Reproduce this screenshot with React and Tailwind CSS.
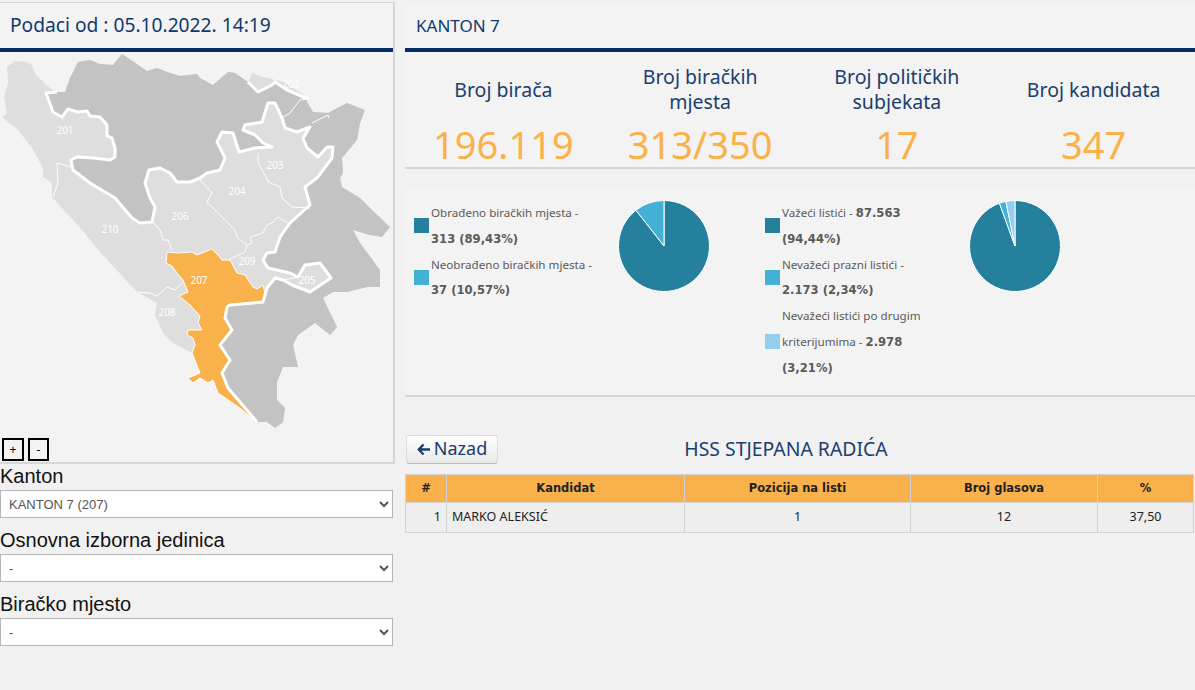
const OUTLINE_TOP = '57,92 65,92 70,78 78,62 90,60 100,64 113,65 122,54 128,58 147,71 157,68 170,73 180,76 197,74 200,78 213,85 228,72 235,73 248,82 258,92 272,85 275,82 287,90 308,99'
const OUTLINE_EAST = '307,102 313,112 328,113 347,103 365,110 360,123 357,140 342,158 343,173 340,178 342,187 360,198 372,210 390,227 382,237 370,235 353,230 360,243 380,270 380,287 367,287 347,292 333,292 323,298 337,327 330,335 315,323 298,335 293,345 298,367 283,367 277,382 277,400 285,408 283,422 275,428 267,422 258,422'
const BOUNDARY = '257,422 228,388 222,373 230,360 220,345 232,330 225,318 227,307 230,305 263,302 267,288 275,278 283,280 292,285 310,292 331,278 320,263 305,265 298,277 290,273 268,268 263,260 267,253 275,252 280,237 290,223 310,205 305,187 317,178 332,158 333,147 327,147 318,157 307,148 303,138 310,127 297,132 285,128 282,118 275,103 268,103 262,122 245,125 243,130 255,135 263,143 272,147 255,148 239,152 233,133 222,132 217,142 225,158 220,170 207,173 200,178 190,182 177,182 170,173 160,168 149,170 145,183 150,198 155,207 152,222 140,223 132,218 115,198 90,183 73,170 71,160 77,157 93,158 110,160 115,157 115,148 112,138 107,136 107,125 100,117 90,116 87,111 78,112 68,109 62,117 53,112 46,93 57,92'
const ORANGE = '167,252 178,253 192,252 197,255 212,249 218,255 222,260 230,260 237,273 245,275 253,287 257,289 263,285 265,293 263,303 230,305 227,307 225,318 232,330 220,345 230,360 222,373 228,388 257,423 240,408 218,393 213,380 208,383 200,378 193,383 188,378 200,373 192,353 195,345 193,338 187,335 188,330 202,330 198,323 200,316 190,305 179,296 188,292 183,280 177,273 172,266 166,263'
const COAST = '257,423 240,408 218,393 213,380 208,383 200,378 193,383 188,378 200,373 192,353 173,343 163,333 155,315 157,303 137,292 100,252 82,230 52,197 52,183 43,177 43,168 35,153 32,148 18,130 2,117 7,113 4,98 8,83 7,67 15,61 27,62 31,64 36,75 50,88'
const THIN_LINES = [
  '71,167 57,163 58,183 53,197',
  '153,222 160,230 163,240 168,240 172,250',
  '200,180 212,193 207,202 225,220 235,230 238,238 247,245 245,252 228,260',
  '247,245 252,243 250,237 263,233 267,225 272,223 278,217 288,223',
  '258,153 258,163 265,175 268,182 280,187 282,198 292,207 310,208',
  '137,292 150,293 157,296 167,287 175,290 185,280',
  '282,118 290,113 300,100 308,99',
  '312,123 328,115 329,118',
  '283,280 298,277',
]
const MAP_LABELS = [
  ['201', 65, 134], ['202', 291, 88], ['203', 275, 169], ['204', 237, 195], ['206', 180, 220],
  ['210', 110, 233], ['209', 247, 265], ['207', 199, 284], ['208', 167, 316], ['205', 307, 284],
]

const TEAL = '#24809d'
const SKY = '#43b0d6'
const PALE = '#93ceee'

function pieSlices(values) {
  const total = values.reduce((a, b) => a + b, 0)
  let angle = 0
  return values.map((v) => {
    const start = angle
    angle += (v / total) * Math.PI * 2
    const large = angle - start > Math.PI ? 1 : 0
    const p = (a) => `${(46 + 45.5 * Math.sin(a)).toFixed(2)} ${(46 - 45.5 * Math.cos(a)).toFixed(2)}`
    return `M46 46 L${p(start)} A45.5 45.5 0 ${large} 1 ${p(angle)} Z`
  })
}

function Pie({ values, colors }) {
  return (
    <svg width="92" height="92" viewBox="0 0 92 92" className="block">
      {pieSlices(values).map((d, i) => (
        <path key={i} d={d} fill={colors[i]} stroke="#ffffff" strokeWidth="1" strokeLinejoin="round" />
      ))}
    </svg>
  )
}

function BosniaMap() {
  return (
    <svg width="393" height="410" viewBox="0 52 393 410" className="block">
      <polygon points={`${OUTLINE_TOP} ${OUTLINE_EAST} ${COAST}`} fill="#dedede" />
      <polygon points={`${OUTLINE_TOP} ${OUTLINE_EAST} ${BOUNDARY}`} fill="#c3c3c3" />
      <polygon points="252,73 263,77 275,80 283,82 300,92 308,98 287,90 275,82 272,85 258,92 248,82" fill="#dedede" />
      {THIN_LINES.map((pts) => (
        <polyline key={pts} points={pts} fill="none" stroke="#ffffff" strokeWidth="1" />
      ))}
      <polygon points={ORANGE} fill="#f9b14b" stroke="#ffffff" strokeWidth="1" />
      <polyline points={BOUNDARY} fill="none" stroke="#ffffff" strokeWidth="3" strokeLinejoin="round" />
      <polyline points="248,82 258,92 272,85 275,82 287,90 308,99" fill="none" stroke="#ffffff" strokeWidth="3" strokeLinejoin="round" />
      {MAP_LABELS.map(([t, x, y]) => (
        <text key={t} x={x} y={y} textAnchor="middle" fill="#ffffff" fontSize="10" fontFamily="'Noto Sans', sans-serif">
          {t}
        </text>
      ))}
    </svg>
  )
}

function Dropdown({ label, value }) {
  return (
    <div className="mb-[10px]">
      <div className="h-[26px] text-[20px] leading-[24px] text-[#111] font-['Liberation_Sans',sans-serif]">{label}</div>
      <select
        defaultValue={value}
        className="block w-[393px] h-[28px] bg-white border border-[#b5b5b5] pl-[4px] text-[13px] text-[#555] font-['Liberation_Sans',sans-serif]"
      >
        <option value={value}>{value}</option>
      </select>
    </div>
  )
}

function Stat({ title, value }) {
  return (
    <div className="flex-1 flex flex-col items-center">
      <div className="h-[74px] w-[170px] flex items-center justify-center text-center text-[19.5px] leading-[25px] text-[#1a3e6e]">
        {title}
      </div>
      <div className="text-[38px] leading-[40px] text-[#fbb149] mt-[-2px]">{value}</div>
    </div>
  )
}

function LegendRow({ color, width, children }) {
  return (
    <div className="flex items-center">
      <span className="w-[15px] h-[15px] shrink-0" style={{ backgroundColor: color }} />
      <div className={`ml-[2px] ${width}`}>{children}</div>
    </div>
  )
}

const boldText = "font-bold text-[11.6px] leading-none font-['DejaVu_Sans',sans-serif]"

export default function App() {
  return (
    <div className="w-[1195px] h-[690px] bg-[#f1f1f1] flex overflow-hidden font-['Noto_Sans',sans-serif]">
      <div className="w-[395px] shrink-0 pt-[2px]">
        <div className="bg-[#f3f3f3] border-t border-r-2 border-b-2 border-[#d6d6d6] relative">
          <div className="h-[45px] flex items-center pl-[10px] text-[19.2px] text-[#0f3a6b]">Podaci od : 05.10.2022. 14:19</div>
          <div className="h-[4px] bg-[#032f63]" />
          <BosniaMap />
          <div className="absolute left-[2px] bottom-[1px] flex gap-[4px]">
            <button className="w-[22px] h-[23px] border-2 border-black text-[12px] leading-none text-black">+</button>
            <button className="w-[21px] h-[23px] border-2 border-black text-[12px] leading-none text-black">-</button>
          </div>
        </div>
        <Dropdown label="Kanton" value="KANTON 7 (207)" />
        <Dropdown label="Osnovna izborna jedinica" value="-" />
        <Dropdown label="Biračko mjesto" value="-" />
      </div>

      <div className="ml-[10px] flex-1 pt-[3px]">
        <div className="bg-[#f3f3f3] border-b-2 border-[#d6d6d6] h-[166px]">
          <div className="h-[45px] flex items-center pl-[11px] text-[17px] text-[#0f3a6b]">KANTON 7</div>
          <div className="h-[4px] bg-[#032f63]" />
          <div className="flex pr-[3px]">
            <Stat title="Broj birača" value="196.119" />
            <Stat title="Broj biračkih mjesta" value="313/350" />
            <Stat title="Broj političkih subjekata" value="17" />
            <Stat title="Broj kandidata" value="347" />
          </div>
        </div>

        <div className="mt-[21px] h-[207px] bg-[#f3f3f3] border-b-2 border-[#d6d6d6] flex text-[11.6px] leading-[25.8px] text-[#5a5a5a]">
          <div className="w-[213px] ml-[9px] pt-[10px] shrink-0">
            <LegendRow color={TEAL} width="w-[168px]">Obrađeno biračkih mjesta - <b className={boldText}>313 (89,43%)</b></LegendRow>
            <LegendRow color={SKY} width="w-[168px]">Neobrađeno biračkih mjesta - <b className={boldText}>37 (10,57%)</b></LegendRow>
          </div>
          <div className="w-[92px] ml-[-9px] pt-[10px] shrink-0">
            <Pie values={[89.43, 10.57]} colors={[TEAL, SKY]} />
          </div>
          <div className="w-[165px] ml-[55px] pt-[10px] shrink-0">
            <LegendRow color={TEAL} width="w-[145px]">Važeći listići - <b className={boldText}>87.563 (94,44%)</b></LegendRow>
            <LegendRow color={SKY} width="w-[145px]">Nevažeći prazni listići - <b className={boldText}>2.173 (2,34%)</b></LegendRow>
            <LegendRow color={PALE} width="w-[145px]">Nevažeći listići po drugim kriterijumima - <b className={boldText}>2.978 (3,21%)</b></LegendRow>
          </div>
          <div className="w-[92px] ml-[39px] pt-[10px] shrink-0">
            <Pie values={[94.44, 2.34, 3.21]} colors={[TEAL, SKY, PALE]} />
          </div>
        </div>

        <div className="mt-[38px] relative h-[29px] flex items-center justify-center text-[19.4px] text-[#1a3e6e]">
          <button className="absolute left-[1px] top-0 w-[92px] h-[29px] pb-[2px] rounded-[3px] border border-[#dcdcdc] border-b-[#bbbbbb] bg-gradient-to-b from-[#ffffff] to-[#e8e8e8] flex items-center justify-center text-[18px] text-[#1a3e6e]">
            <svg width="14" height="13" viewBox="0 0 14 13" className="mr-[3px] mt-[2px]">
              <path d="M6.5 1.5 L1.8 6.5 L6.5 11.5 M2 6.5 H13" fill="none" stroke="#1a3e6e" strokeWidth="2.4" />
            </svg>
            Nazad
          </button>
          <span className="ml-[-28px] mb-[2px]">HSS STJEPANA RADIĆA</span>
        </div>

        <table className="mt-[10px] w-[788px] table-fixed border-collapse text-[12.5px] text-[#222]">
          <thead className="text-[11.5px] font-['DejaVu_Sans',sans-serif]">
            <tr className="bg-[#f9b14b] h-[28px]">
              <th className="w-[41px] border border-[#d2d2d2] font-bold">#</th>
              <th className="w-[238px] border border-[#d2d2d2] font-bold">Kandidat</th>
              <th className="w-[226px] border border-[#d2d2d2] font-bold">Pozicija na listi</th>
              <th className="w-[187px] border border-[#d2d2d2] font-bold">Broj glasova</th>
              <th className="w-[96px] border border-[#d2d2d2] font-bold">%</th>
            </tr>
          </thead>
          <tbody>
            <tr className="bg-[#eeeeee] h-[30px]">
              <td className="border border-[#d2d2d2] text-right pr-[5px]">1</td>
              <td className="border border-[#d2d2d2] pl-[5px]">MARKO ALEKSIĆ</td>
              <td className="border border-[#d2d2d2] text-center">1</td>
              <td className="border border-[#d2d2d2] text-center">12</td>
              <td className="border border-[#d2d2d2] text-center">37,50</td>
            </tr>
          </tbody>
        </table>
      </div>
    </div>
  )
}
